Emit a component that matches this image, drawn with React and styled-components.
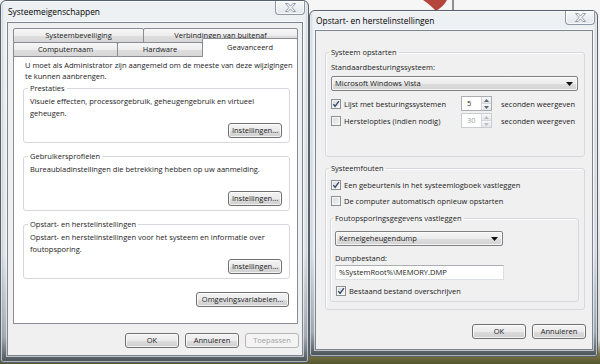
import React from "react";
import styled, { createGlobalStyle, css } from "styled-components";

const GlobalStyle = createGlobalStyle`
  html, body { margin: 0; padding: 0; }
  body {
    font-family: "Open Sans", "Noto Sans", sans-serif;
    font-size: 7.5px;
    line-height: 12px;
    color: #1b1b1b;
  }
  * { box-sizing: border-box; }
`;

const px = (v) => (typeof v === "number" ? `${v}px` : v || "0");

const Desktop = styled.div`
  position: relative;
  width: 600px;
  height: 364px;
  overflow: hidden;
  background: linear-gradient(
    to bottom,
    #f6f6f6 0px,
    #ededed 180px,
    #d9d9d5 340px,
    #7a7442 354px,
    #55562f 364px
  );
`;

const Wallpaper = styled.svg`
  position: absolute;
  inset: 0;
  width: 600px;
  height: 364px;
`;

const Window = styled.section`
  position: absolute;
  left: ${(p) => p.$left}px;
  top: ${(p) => p.$top}px;
  width: ${(p) => p.$width}px;
  height: ${(p) => p.$height}px;
  display: flex;
  flex-direction: column;
  padding: 0 ${(p) => p.$padR}px 6px ${(p) => p.$padL}px;
  border: 1px solid #56616b;
  border-radius: 6px 6px 3px 3px;
  background:
    linear-gradient(
      to right,
      rgba(120, 130, 140, 0.35) 0px,
      rgba(255, 255, 255, 0) 3px,
      rgba(255, 255, 255, 0) calc(100% - 3px),
      rgba(120, 130, 140, 0.35) 100%
    ),
    linear-gradient(
      to bottom,
      #eef1f4 0%,
      #e2e7ec 70%,
      #a4acb3 93%,
      #4a5157 100%
    );
  box-shadow: inset 0 0 0 1px rgba(255, 255, 255, 0.55);
`;

const TitleBar = styled.header`
  height: ${(p) => p.$h}px;
  display: flex;
  align-items: flex-start;
  justify-content: space-between;
  flex: none;
`;

const Title = styled.h1`
  margin: 0;
  align-self: center;
  padding-left: 1px;
  font-size: 8.4px;
  font-weight: 400;
  line-height: 12px;
  color: #000;
`;

const CloseButton = styled.button`
  width: 30px;
  height: 14px;
  margin-right: -2px;
  padding: 0;
  display: flex;
  align-items: center;
  justify-content: center;
  border: 1px solid #8d98a3;
  border-top: none;
  border-radius: 0 0 4px 4px;
  background: linear-gradient(#f7f9fa, #e2e7eb);
  box-shadow: inset 0 0 0 1px rgba(255, 255, 255, 0.7);
`;

const Client = styled.div`
  flex: 1;
  display: flex;
  flex-direction: column;
  background: #f0f0f0;
  border: 1px solid #7b8692;
  box-shadow: 0 0 0 1px rgba(255, 255, 255, 0.6);
  padding: ${(p) => p.$pad};
`;

const TabStrip = styled.div`
  display: flex;
  flex-direction: column;
`;

const TabRow = styled.div`
  display: flex;
  align-items: flex-start;

  & + & {
    margin-top: -1px;
  }
`;

const Tab = styled.div`
  width: ${(p) => p.$w}px;
  height: 15px;
  margin-left: -1px;
  border: 1px solid #898c95;
  border-radius: 2px 2px 0 0;
  background: linear-gradient(#f7f7f7 0%, #ededed 50%, #dfdfdf 51%, #d6d6d6 100%);
  text-align: center;
  line-height: 13px;
  white-space: nowrap;

  &:first-child {
    margin-left: 0;
  }

  ${(p) =>
    p.$active &&
    css`
      position: relative;
      z-index: 2;
      height: 19px;
      margin-top: -4px;
      margin-bottom: -1px;
      border-bottom: none;
      background: #fff;
      line-height: 16px;
    `}
`;

const TabPanel = styled.div`
  flex: 1;
  margin-top: -1px;
  display: flex;
  flex-direction: column;
  padding: 3px 7px 0 9px;
  background: #fff;
  border: 1px solid #898c95;
`;

const Intro = styled.p`
  margin: 0 0 0 2px;
  line-height: 11px;
  white-space: nowrap;
`;

const GroupBox = styled.fieldset`
  margin: ${(p) => p.$m || "0"};
  padding: ${(p) => p.$pad};
  min-width: 0;
  border: 1px solid #d5d9de;
  border-radius: 3px;
  box-shadow: inset 1px 1px 0 rgba(255, 255, 255, 0.8);
`;

const Legend = styled.legend`
  margin-left: -2px;
  padding: 0 2px;
  line-height: 12px;
  white-space: nowrap;
`;

const Desc = styled.p`
  margin: 1px 0 0;
  min-height: 24px;
  line-height: 12px;
  white-space: nowrap;
`;

const Actions = styled.div`
  display: flex;
  justify-content: flex-end;
  gap: 6px;
  margin-top: ${(p) => px(p.$mt)};
  margin-right: ${(p) => px(p.$mr)};
`;

const Button = styled.button`
  width: ${(p) => p.$w}px;
  height: 15px;
  padding: 0;
  font: inherit;
  line-height: 13px;
  color: #1b1b1b;
  border: 1px solid #707070;
  border-radius: 3px;
  background: linear-gradient(#f3f3f3 0%, #ebebeb 50%, #dddddd 51%, #cfcfcf 100%);
  box-shadow: inset 0 0 0 1px rgba(255, 255, 255, 0.75);
  white-space: nowrap;

  &:disabled {
    color: #a3a3a3;
    border-color: #b3b7ba;
    background: #f4f4f4;
    box-shadow: none;
  }
`;

const FieldLabel = styled.div`
  margin-top: ${(p) => px(p.$mt)};
  line-height: 12px;
`;

const Select = styled.div`
  width: ${(p) => (p.$w ? `${p.$w}px` : "auto")};
  height: 15px;
  margin-top: ${(p) => px(p.$mt)};
  display: flex;
  align-items: center;
  justify-content: space-between;
  padding: 0 4px 0 3px;
  border: 1px solid #7f8184;
  border-radius: 2px;
  background: linear-gradient(#f5f5f5 0%, #ececec 50%, #dedede 51%, #d2d2d2 100%);
  box-shadow: inset 0 0 0 1px rgba(255, 255, 255, 0.75);
  line-height: 13px;
`;

const TextField = styled.div`
  width: ${(p) => p.$w}px;
  height: 15px;
  margin-top: ${(p) => px(p.$mt)};
  padding-left: 3px;
  background: #fff;
  border: 1px solid #dbdfe6;
  border-top-color: #abadb3;
  line-height: 13px;
`;

const OptionGrid = styled.div`
  display: grid;
  grid-template-columns: 121px 31px auto;
  column-gap: 9px;
  row-gap: 2px;
  align-items: center;
  margin-top: 5px;
`;

const CheckRow = styled.label`
  height: 14px;
  display: flex;
  align-items: center;
  gap: 3px;
  margin-top: ${(p) => px(p.$mt)};
  padding-left: ${(p) => px(p.$pl)};
  white-space: nowrap;
`;

const CheckBox = styled.span`
  flex: none;
  width: 10px;
  height: 10px;
  display: flex;
  align-items: center;
  justify-content: center;
  border: 1px solid #8e8f8f;
  background: linear-gradient(135deg, #d4d8dd 0%, #f7f7f7 100%);
  box-shadow: inset 0 0 0 1px #f6f6f6;
`;

const Spin = styled.div`
  width: 31px;
  height: 15px;
  display: flex;
  background: #fff;
  border: 1px solid ${(p) => (p.$disabled ? "#c9ccd1" : "#abadb3")};
  color: ${(p) => (p.$disabled ? "#9c9c9c" : "inherit")};
`;

const SpinValue = styled.span`
  flex: 1;
  padding-left: 5px;
  line-height: 13px;
`;

const SpinArrows = styled.div`
  width: 10px;
  display: flex;
  flex-direction: column;
  border-left: 1px solid #d3d6da;
`;

const SpinArrow = styled.div`
  flex: 1;
  display: flex;
  align-items: center;
  justify-content: center;
  background: linear-gradient(#f7f8f9, #e3e6e9);

  & + & {
    border-top: 1px solid #d3d6da;
  }
`;

const CloseGlyph = () => (
  <svg width="11" height="9" viewBox="0 0 11 9">
    <path
      d="M0.5 0.5H3.2L5.5 3.1L7.8 0.5H10.5L7 4.5L10.5 8.5H7.8L5.5 5.9L3.2 8.5H0.5L4 4.5Z"
      fill="#f6f7f8"
      stroke="#7d8894"
      strokeWidth="0.8"
    />
  </svg>
);

const DropArrow = () => (
  <svg width="7" height="4" viewBox="0 0 7 4">
    <polygon points="0,0 7,0 3.5,4" fill="#111" />
  </svg>
);

const Tick = () => (
  <svg width="8" height="8" viewBox="0 0 8 8">
    <path d="M1.3 4.1L3.1 6.3L6.9 1.1" fill="none" stroke="#3a4a6c" strokeWidth="1.4" />
  </svg>
);

const Check = ({ checked, label, mt, pl }) => (
  <CheckRow $mt={mt} $pl={pl}>
    <CheckBox>{checked && <Tick />}</CheckBox>
    {label}
  </CheckRow>
);

const Stepper = ({ value, disabled }) => {
  const c = disabled ? "#b9bdc2" : "#5f6670";
  return (
    <Spin $disabled={disabled}>
      <SpinValue>{value}</SpinValue>
      <SpinArrows>
        <SpinArrow>
          <svg width="5" height="3" viewBox="0 0 5 3">
            <polygon points="0,3 5,3 2.5,0" fill={c} />
          </svg>
        </SpinArrow>
        <SpinArrow>
          <svg width="5" height="3" viewBox="0 0 5 3">
            <polygon points="0,0 5,0 2.5,3" fill={c} />
          </svg>
        </SpinArrow>
      </SpinArrows>
    </Spin>
  );
};

const groups = [
  {
    title: "Prestaties",
    lines: ["Visuele effecten, processorgebruik, geheugengebruik en virtueel", "geheugen."],
  },
  {
    title: "Gebruikersprofielen",
    lines: ["Bureaubladinstellingen die betrekking hebben op uw aanmelding."],
  },
  {
    title: "Opstart- en herstelinstellingen",
    lines: ["Opstart- en herstelinstellingen voor het systeem en informatie over", "foutopsporing."],
  },
];

export default function App() {
  return (
    <>
      <GlobalStyle />
      <Desktop>
        <Wallpaper viewBox="0 0 600 364">
          <path d="M423 0H447C445 4 441 8 436 11C432 7 428 3 423 0Z" fill="#b4463e" />
          <rect x="452" y="0" width="2" height="12" fill="#8f8f8f" />
        </Wallpaper>

        <Window $left={0} $top={0} $width={309} $height={363} $padL={6} $padR={5}>
          <TitleBar $h={21}>
            <Title>Systeemeigenschappen</Title>
            <CloseButton aria-label="Sluiten">
              <CloseGlyph />
            </CloseButton>
          </TitleBar>
          <Client $pad="5px 4px 7px 5px">
            <TabStrip>
              <TabRow>
                <Tab $w={131}>Systeembeveiliging</Tab>
                <Tab $w={155}>Verbindingen van buitenaf</Tab>
              </TabRow>
              <TabRow>
                <Tab $w={105}>Computernaam</Tab>
                <Tab $w={86}>Hardware</Tab>
                <Tab $w={96} $active>
                  Geavanceerd
                </Tab>
              </TabRow>
            </TabStrip>
            <TabPanel>
              <Intro>
                U moet als Administrator zijn aangemeld om de meeste van deze wijzigingen
                <br />
                te kunnen aanbrengen.
              </Intro>
              {groups.map((g, i) => (
                <GroupBox key={g.title} $m={i ? "7px 0 0" : "0"} $pad="0 7px 4px 6px">
                  <Legend>{g.title}</Legend>
                  <Desc>
                    {g.lines.map((l, j) => (
                      <React.Fragment key={j}>
                        {j > 0 && <br />}
                        {l}
                      </React.Fragment>
                    ))}
                  </Desc>
                  <Actions $mt={4}>
                    <Button $w={54}>Instellingen...</Button>
                  </Actions>
                </GroupBox>
              ))}
              <Actions $mt={13} $mr={1}>
                <Button $w={93}>Omgevingsvariabelen...</Button>
              </Actions>
            </TabPanel>
            <Actions $mt={9} $mr={-1}>
              <Button $w={54}>OK</Button>
              <Button $w={54}>Annuleren</Button>
              <Button $w={54} disabled>
                Toepassen
              </Button>
            </Actions>
          </Client>
        </Window>

        <Window $left={309} $top={10} $width={289} $height={347} $padL={5} $padR={4}>
          <TitleBar $h={19}>
            <Title>Opstart- en herstelinstellingen</Title>
            <CloseButton aria-label="Sluiten">
              <CloseGlyph />
            </CloseButton>
          </TitleBar>
          <Client $pad="15px 7px 10px 9px">
            <GroupBox $pad="0 6px 28px 5px">
              <Legend>Systeem opstarten</Legend>
              <FieldLabel $mt={3}>Standaardbesturingssysteem:</FieldLabel>
              <Select $mt={3}>
                Microsoft Windows Vista
                <DropArrow />
              </Select>
              <OptionGrid>
                <Check checked label="Lijst met besturingssystemen" />
                <Stepper value="5" />
                <span>seconden weergeven</span>
                <Check label="Herstelopties (indien nodig)" />
                <Stepper value="30" disabled />
                <span>seconden weergeven</span>
              </OptionGrid>
            </GroupBox>

            <GroupBox $m="5px 0 0" $pad="0 6px 7px 5px">
              <Legend>Systeemfouten</Legend>
              <Check checked mt={4} label="Een gebeurtenis in het systeemlogboek vastleggen" />
              <Check mt={2} label="De computer automatisch opnieuw opstarten" />
              <GroupBox $m="4px -1px 0" $pad="0 4px 3px 4px">
                <Legend>Foutopsporingsgegevens vastleggen</Legend>
                <Select $w={168} $mt={7}>
                  Kernelgeheugendump
                  <DropArrow />
                </Select>
                <FieldLabel $mt={6}>Dumpbestand:</FieldLabel>
                <TextField $w={169} $mt={1}>
                  %SystemRoot%\MEMORY.DMP
                </TextField>
                <Check checked mt={4} pl={1} label="Bestaand bestand overschrijven" />
              </GroupBox>
            </GroupBox>

            <Actions $mt="auto" $mr={-1}>
              <Button $w={54}>OK</Button>
              <Button $w={54}>Annuleren</Button>
            </Actions>
          </Client>
        </Window>
      </Desktop>
    </>
  );
}
